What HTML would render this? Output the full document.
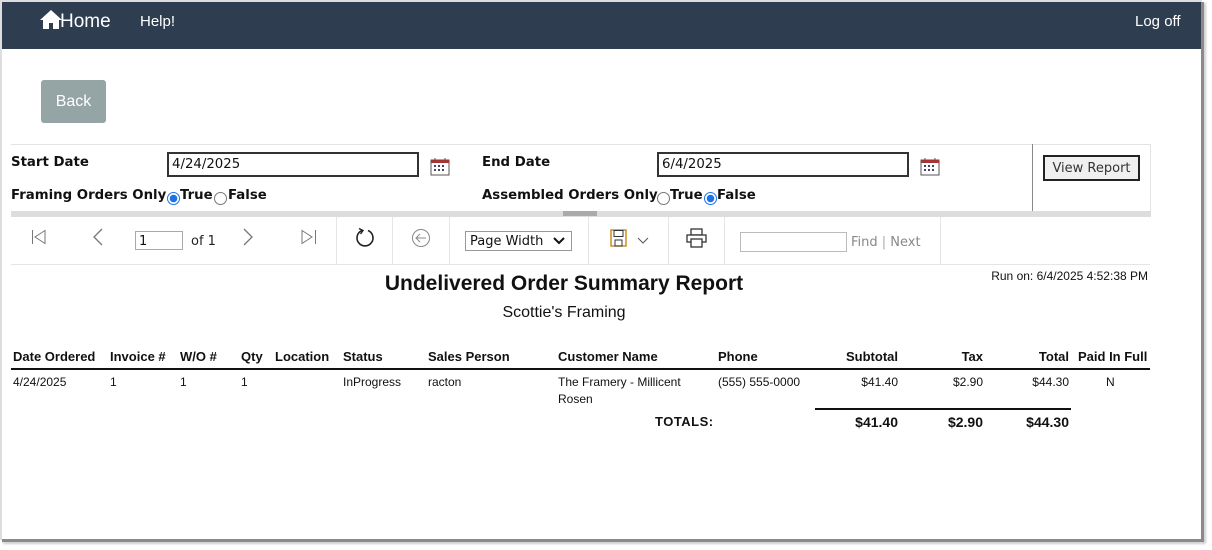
<!DOCTYPE html>
<html><head><meta charset="utf-8"><style>
*{margin:0;padding:0;box-sizing:border-box}
body{width:1212px;height:550px;background:#fff;position:relative;overflow:hidden;font-family:"Liberation Sans",Arial,sans-serif}
.a{position:absolute;white-space:nowrap}
.v{font-family:"DejaVu Sans",Verdana,sans-serif;font-size:13.3px;font-weight:bold;color:#111}
.inp{position:absolute;border:2px solid #333;background:#fff;font-family:"DejaVu Sans",Verdana,sans-serif;font-size:13.3px;padding:3px 3px 0;color:#111}
.th{font-size:13px;font-weight:bold;color:#111;top:349px}
.td{font-size:12px;color:#111;top:375px}
.sep{position:absolute;top:217px;width:1px;height:47px;background:#e5e5e5}
.rad{position:absolute;width:13px;height:13px;border-radius:50%;border:1px solid #777;background:#fff}
.rad.on{border:1px solid #1a73e8;background:radial-gradient(circle,#1a73e8 0 3.5px,#fff 4px)}
</style></head><body>
<div class="a" style="left:0;top:0;width:1202px;height:2px;background:#ddd"></div>
<div class="a" style="left:0;top:0;width:2px;height:540px;background:#ddd"></div>
<div class="a" style="left:1201px;top:2px;width:3px;height:540px;background:#8a8a8a;box-shadow:2px 1px 2px #ccc"></div>
<div class="a" style="left:2px;top:539px;width:1202px;height:3px;background:#8a8a8a;box-shadow:1px 2px 2px #ccc"></div>
<div class="a" style="left:2px;top:2px;width:1199px;height:47px;background:#2e3e50"></div>
<svg class="a" style="left:40px;top:10px" width="22" height="19" viewBox="0 0 22 19"><path d="M11 0 L22 10 L19 10 L19 19 L13 19 L13 13 L9 13 L9 19 L3 19 L3 10 L0 10 Z" fill="#fff"/></svg>
<div class="a" style="left:60px;top:11px;color:#fff;font-size:19px">Home</div>
<div class="a" style="left:140px;top:13px;color:#fff;font-size:15px">Help!</div>
<div class="a" style="left:1135px;top:13px;color:#fff;font-size:15px">Log off</div>
<div class="a" style="left:41px;top:80px;width:65px;height:43px;background:#95a5a6;border-radius:3px;color:#fff;font-size:16px;line-height:44px;text-align:center">Back</div>
<div class="a" style="left:11px;top:144px;width:1139px;height:1px;background:#e3e3e3"></div>
<div class="a" style="left:1032px;top:144px;width:1px;height:67px;background:#888"></div>
<div class="a" style="left:1150px;top:144px;width:1px;height:67px;background:#e3e3e3"></div>
<div class="a" style="left:11px;top:211px;width:1140px;height:6px;background:#ddd"></div>
<div class="a" style="left:563px;top:211px;width:34px;height:5px;background:#aaa"></div>
<div class="a v" style="left:11px;top:155px">Start Date</div>
<div class="inp" style="left:167px;top:152px;width:252px;height:25px">4/24/2025</div>
<div class="a v" style="left:482px;top:155px">End Date</div>
<div class="inp" style="left:657px;top:152px;width:252px;height:25px">6/4/2025</div>
<svg class="a" style="left:430px;top:157px" width="20" height="19" viewBox="0 0 20 19"><rect x="1" y="3" width="18" height="15" fill="#fff" stroke="#555"/><rect x="1" y="3" width="18" height="3" fill="#a33"/><path d="M5 1v4M15 1v4" stroke="#555"/><g fill="#446"><rect x="4" y="8" width="2" height="2"/><rect x="8" y="8" width="2" height="2"/><rect x="12" y="8" width="2" height="2"/><rect x="4" y="12" width="2" height="2"/><rect x="8" y="12" width="2" height="2"/><rect x="12" y="12" width="2" height="2"/></g></svg>
<svg class="a" style="left:920px;top:157px" width="20" height="19" viewBox="0 0 20 19"><rect x="1" y="3" width="18" height="15" fill="#fff" stroke="#555"/><rect x="1" y="3" width="18" height="3" fill="#a33"/><path d="M5 1v4M15 1v4" stroke="#555"/><g fill="#446"><rect x="4" y="8" width="2" height="2"/><rect x="8" y="8" width="2" height="2"/><rect x="12" y="8" width="2" height="2"/><rect x="4" y="12" width="2" height="2"/><rect x="8" y="12" width="2" height="2"/><rect x="12" y="12" width="2" height="2"/></g></svg>
<div class="a v" style="left:11px;top:188px">Framing Orders Only</div>
<div class="rad on" style="left:167px;top:192px"></div>
<div class="a v" style="left:180px;top:188px">True</div>
<div class="rad" style="left:214px;top:192px"></div>
<div class="a v" style="left:228px;top:188px">False</div>
<div class="a v" style="left:482px;top:188px">Assembled Orders Only</div>
<div class="rad" style="left:657px;top:192px"></div>
<div class="a v" style="left:670px;top:188px">True</div>
<div class="rad on" style="left:704px;top:192px"></div>
<div class="a v" style="left:717px;top:188px">False</div>
<div class="a" style="left:1043px;top:155px;width:97px;height:26px;border:2px solid #222;background:#f0f0f0;font-family:'DejaVu Sans',Verdana,sans-serif;font-size:13px;color:#333;text-align:center;line-height:23px">View Report</div>
<div class="a" style="left:11px;top:264px;width:1139px;height:1px;background:#e5e5e5"></div>
<div class="sep" style="left:336px"></div><div class="sep" style="left:392px"></div><div class="sep" style="left:449px"></div><div class="sep" style="left:588px"></div><div class="sep" style="left:668px"></div><div class="sep" style="left:724px"></div><div class="sep" style="left:940px"></div>
<svg class="a" style="left:31px;top:229px" width="16" height="16"><path d="M1.5 1v14M14 1.5L4 8l10 6.5z" stroke="#777" fill="none"/></svg>
<svg class="a" style="left:92px;top:228px" width="12" height="18"><path d="M10 1L2 9l8 8" stroke="#777" fill="none" stroke-width="1.3"/></svg>
<div class="a" style="left:135px;top:231px;width:48px;height:19px;border:1px solid #aaa;font-family:'DejaVu Sans',sans-serif;font-size:13px;padding:2px 3px 0;color:#111">1</div>
<div class="a" style="left:191px;top:234px;font-family:'DejaVu Sans',sans-serif;font-size:13px;color:#222">of 1</div>
<svg class="a" style="left:242px;top:228px" width="12" height="18"><path d="M2 1l8 8-8 8" stroke="#777" fill="none" stroke-width="1.3"/></svg>
<svg class="a" style="left:300px;top:229px" width="17" height="16"><path d="M15.5 1v14M2 1.5L12 8 2 14.5z" stroke="#777" fill="none"/></svg>
<svg class="a" style="left:354px;top:227px" width="22" height="22"><path d="M8 3.5A8 8 0 1 0 14 3.5" stroke="#222" fill="none" stroke-width="1.6"/><path d="M5 1.5l4 2-2.5 3.5" stroke="#222" fill="none" stroke-width="1.4"/></svg>
<svg class="a" style="left:411px;top:228px" width="20" height="20"><circle cx="10" cy="10" r="8.5" stroke="#888" fill="none"/><path d="M15 10H5M9 6l-4 4 4 4" stroke="#888" fill="none"/></svg>
<div class="a" style="left:465px;top:231px;width:107px;height:20px;border:1px solid #999;font-family:'DejaVu Sans',sans-serif;font-size:13px;padding:2px 4px 0;color:#111">Page Width</div>
<svg class="a" style="left:553px;top:237px" width="12" height="8"><path d="M1 1l5 5 5-5" stroke="#111" stroke-width="2" fill="none"/></svg>
<svg class="a" style="left:610px;top:229px" width="17" height="18"><rect x="1" y="1" width="15" height="16" fill="#fff" stroke="#c77b00" stroke-width="1.3"/><rect x="4" y="1.5" width="9" height="6" fill="none" stroke="#333"/><rect x="5" y="11" width="7" height="6" fill="none" stroke="#333"/></svg>
<svg class="a" style="left:637px;top:237px" width="12" height="8"><path d="M1 1l5 5 5-5" stroke="#555" fill="none"/></svg>
<svg class="a" style="left:686px;top:228px" width="21" height="20"><rect x="5" y="1" width="11" height="6" fill="#fff" stroke="#333" stroke-width="1.3"/><rect x="1" y="7" width="19" height="7" fill="#fff" stroke="#333" stroke-width="1.3"/><rect x="5" y="11" width="11" height="8" fill="#fff" stroke="#333" stroke-width="1.3"/></svg>
<div class="a" style="left:740px;top:232px;width:107px;height:20px;border:1px solid #bbb"></div>
<div class="a" style="left:851px;top:235px;font-family:'DejaVu Sans',sans-serif;font-size:13px;color:#888">Find <span style="color:#aaa">|</span> Next</div>
<div class="a" style="left:264px;width:600px;top:272px;text-align:center;font-size:21px;font-weight:bold;color:#111">Undelivered Order Summary Report</div>
<div class="a" style="right:64px;top:269px;font-size:12px;color:#111">Run on: 6/4/2025 4:52:38 PM</div>
<div class="a" style="left:264px;width:600px;top:304px;text-align:center;font-size:16px;color:#111">Scottie's Framing</div>
<div class="a th" style="left:13px">Date Ordered</div>
<div class="a th" style="left:110px">Invoice #</div>
<div class="a th" style="left:180px">W/O #</div>
<div class="a th" style="left:241px">Qty</div>
<div class="a th" style="left:275px">Location</div>
<div class="a th" style="left:343px">Status</div>
<div class="a th" style="left:428px">Sales Person</div>
<div class="a th" style="left:558px">Customer Name</div>
<div class="a th" style="left:718px">Phone</div>
<div class="a th" style="right:314px">Subtotal</div>
<div class="a th" style="right:229px">Tax</div>
<div class="a th" style="right:143px">Total</div>
<div class="a th" style="left:1078px">Paid In Full</div>
<div class="a" style="left:11px;top:368px;width:1139px;height:2px;background:#111"></div>
<div class="a td" style="left:13px">4/24/2025</div>
<div class="a td" style="left:110px">1</div>
<div class="a td" style="left:180px">1</div>
<div class="a td" style="left:241px">1</div>
<div class="a td" style="left:343px">InProgress</div>
<div class="a td" style="left:428px">racton</div>
<div class="a td" style="left:558px">The Framery - Millicent</div>
<div class="a td" style="left:558px;top:392px">Rosen</div>
<div class="a td" style="left:718px">(555) 555-0000</div>
<div class="a td" style="right:314px">$41.40</div>
<div class="a td" style="right:229px">$2.90</div>
<div class="a td" style="right:143px">$44.30</div>
<div class="a td" style="left:1106px">N</div>
<div class="a" style="left:815px;top:408px;width:256px;height:2px;background:#111"></div>
<div class="a th" style="left:655px;top:414px;letter-spacing:0.5px">TOTALS:</div>
<div class="a th" style="right:314px;top:414px;font-size:14px">$41.40</div>
<div class="a th" style="right:229px;top:414px;font-size:14px">$2.90</div>
<div class="a th" style="right:143px;top:414px;font-size:14px">$44.30</div>
</body></html>
